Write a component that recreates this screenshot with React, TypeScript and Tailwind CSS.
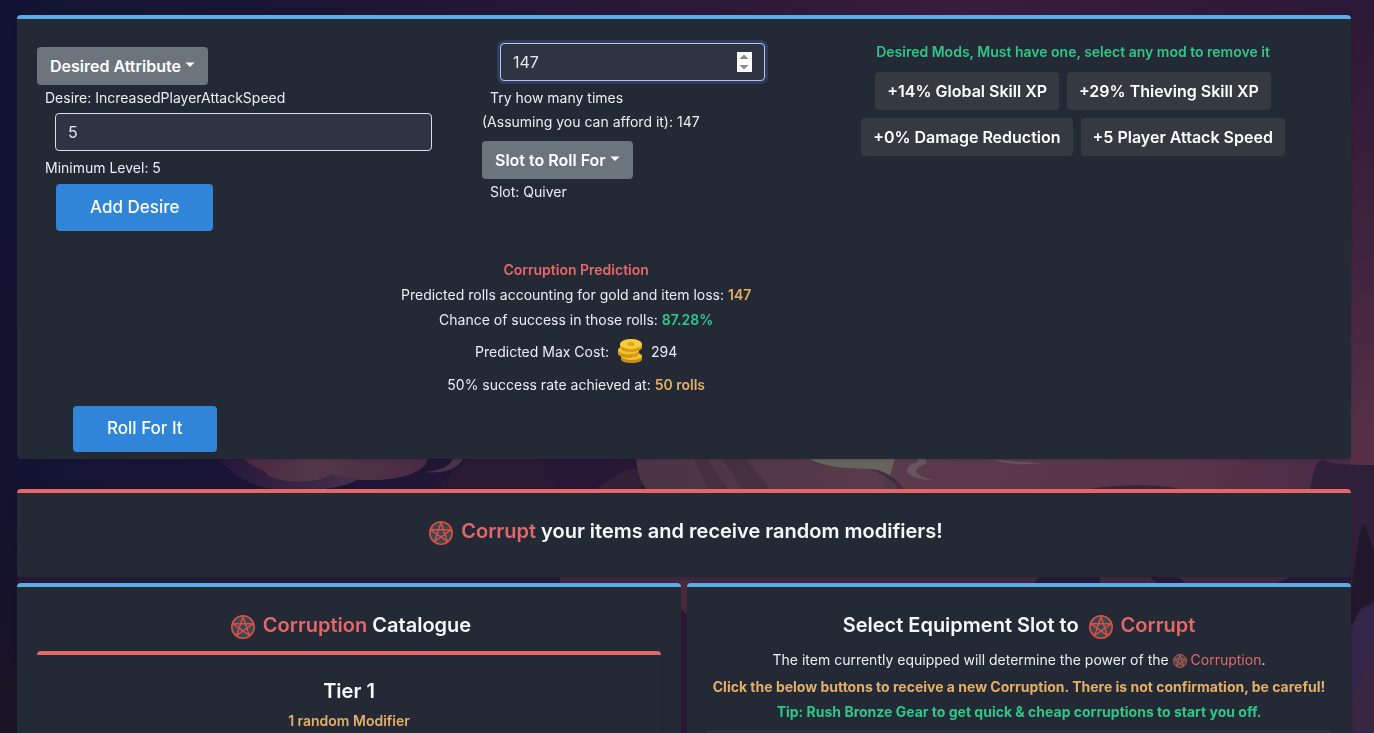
import type { ReactNode } from "react";
import clsx from "clsx";

const desiredMods = [
  "+14% Global Skill XP",
  "+29% Thieving Skill XP",
  "+0% Damage Reduction",
  "+5 Player Attack Speed",
];

const Backdrop = () => (
  <svg
    aria-hidden="true"
    viewBox="0 0 1374 733"
    preserveAspectRatio="xMidYMid slice"
    className="fixed inset-0 -z-10 h-full w-full"
  >
    <defs>
      <linearGradient id="sky" x1="0" x2="1" y1="0" y2="0">
        <stop offset="0" stopColor="#121433" />
        <stop offset="0.25" stopColor="#1e1535" />
        <stop offset="0.5" stopColor="#2a1836" />
        <stop offset="0.7" stopColor="#371e3a" />
        <stop offset="1" stopColor="#2a1836" />
      </linearGradient>
      <linearGradient id="right" x1="0" x2="0" y1="0" y2="1">
        <stop offset="0" stopColor="#2a1836" />
        <stop offset="0.35" stopColor="#40243d" />
        <stop offset="0.6" stopColor="#553047" />
        <stop offset="1" stopColor="#4a2b44" />
      </linearGradient>
      <linearGradient id="left" x1="0" x2="0" y1="0" y2="1">
        <stop offset="0" stopColor="#121433" />
        <stop offset="0.7" stopColor="#14132f" />
        <stop offset="1" stopColor="#1b1424" />
      </linearGradient>
      <linearGradient id="petal" x1="0" x2="1" y1="0" y2="0">
        <stop offset="0" stopColor="#4a2741" />
        <stop offset="0.4" stopColor="#533749" />
        <stop offset="1" stopColor="#4a2a42" />
      </linearGradient>
      <linearGradient id="petalShade" x1="0" x2="1" y1="0" y2="0">
        <stop offset="0" stopColor="#24163a" />
        <stop offset="1" stopColor="#48304a" />
      </linearGradient>
      <linearGradient id="skin" x1="0" x2="1" y1="0" y2="0">
        <stop offset="0" stopColor="#4a3446" />
        <stop offset="0.35" stopColor="#5a3b4b" />
        <stop offset="0.75" stopColor="#58354a" />
        <stop offset="1" stopColor="#4a2a46" />
      </linearGradient>
    </defs>
    <rect width="1374" height="733" fill="url(#sky)" />
    <rect width="17" height="733" fill="url(#left)" />
    <rect x="1345" width="29" height="733" fill="url(#right)" />
    <path d="M215 455C228 470 245 484 270 489H325C345 486 355 482 362 476L340 455Z" fill="url(#petalShade)" />
    <path d="M240 455C247 464 256 467 264 471C270 484 318 485 332 474C345 478 358 480 366 480C396 481 428 474 428 455Z" fill="url(#petal)" />
    <path d="M424 472C444 471 452 464 454 456H464C460 468 447 474 424 472Z" fill="#493348" />
    <path d="M434 489L470 456H540L560 489Z" fill="#2a1932" />
    <path d="M595 489L625 470L658 468L640 489Z" fill="#352039" />
    <path d="M636 455H1350V489H646C640 480 636 470 636 455Z" fill="url(#skin)" />
    <path d="M692 455L708 489H728L704 455ZM720 455L742 489H770L742 455Z" fill="#45303f" />
    <path d="M802 455C818 468 842 469 872 469C884 472 894 480 902 489H884V455Z" fill="#4c3a47" />
    <path d="M802 455C818 466 842 469 872 469C880 470 886 473 890 476L896 455Z" fill="#67635b" />
    <path d="M868 469C884 470 896 478 904 489H900C892 480 882 473 868 469Z" fill="#432c40" />
    <path d="M918 458H926V464C912 468 912 476 934 480C904 480 900 466 918 462Z" fill="#67565f" />
    <path d="M990 459C1008 465 1024 465 1042 463C1024 462 1008 461 990 459Z" fill="#66525f" />
    <path d="M1090 489C1120 484 1155 484 1180 489Z" fill="#3d2240" />
    <path d="M1310 489C1314 474 1314 462 1322 460C1340 465 1352 465 1374 465V733H1345V489Z" fill="#30203a" />
    <path d="M1350 600C1356 560 1358 530 1364 524C1368 534 1372 545 1374 550V600L1350 626Z" fill="#21182b" />
    <path d="M17 572H1351V588H17Z" fill="#281a36" />
    <path d="M118 577H205V586H118Z" fill="#1c2038" />
    <path d="M560 577H1040L1030 586H560ZM1100 577H1150L1160 586H1100ZM1178 577H1290L1270 586H1190Z" fill="#3f2940" />
    <path d="M680 580H690V616C688 616 684 612 680 608Z" fill="#492a3e" />
    <path d="M1351 636C1356 612 1362 602 1374 606V733H1351Z" fill="#32274a" />
    <path d="M1351 700C1362 684 1368 650 1374 628V733H1351Z" fill="#382642" />
  </svg>
);

const CorruptionIcon = ({ className }: { className?: string }) => (
  <svg viewBox="0 0 24 24" aria-hidden="true" className={clsx("inline-block", className)}>
    <circle cx="12" cy="12" r="11.200" fill="#34495e" stroke="#e04f3c" strokeWidth="1.600" />
    <path
      d="M12 1.5L18.3 20.5L2 8.8H22L5.7 20.5Z"
      fill="none"
      stroke="#e04f3c"
      strokeWidth="1.500"
      strokeLinejoin="round"
    />
  </svg>
);

const CoinsIcon = () => (
  <svg viewBox="0 0 26 26" aria-hidden="true" className="mx-2 inline-block h-[26px] w-[26px]">
    <path d="M4 18V21C4 26.4 25 26.4 25 21V18Z" fill="#c88f12" />
    <ellipse cx="14.5" cy="18" rx="10.5" ry="4" fill="#f3c02f" />
    <path d="M1 12V15.5C1 20.8 22 20.8 22 15.5V12Z" fill="#d49b17" />
    <ellipse cx="11.5" cy="12" rx="10.5" ry="4.2" fill="#f3c02f" />
    <path d="M3 6V9.5C3 15.2 25 15.2 25 9.5V6Z" fill="#d9a31c" />
    <ellipse cx="14" cy="6" rx="11" ry="5" fill="#f8cb3c" />
    <ellipse cx="14" cy="6" rx="3.5" ry="2" fill="#dfa91f" />
    <path
      d="M6 10V12.5M9 11V13.5M12 12V14M15 12V14M18 11V13.5M21 10V12.5M4 16V18M7 17V19M10 18V20M13 18V20M11 22V24.5M15 22V25M19 22V24.5"
      stroke="#b8800e"
      strokeWidth="0.8"
    />
  </svg>
);

type BlockProps = {
  color: "blue" | "red";
  className?: string;
  children: ReactNode;
};

const Block = ({ color, className, children }: BlockProps) => (
  <section
    className={clsx(
      "rounded border-t-4 bg-[#232a35] px-5 shadow-sm",
      color === "blue" ? "border-[#5cace5]" : "border-[#e56767]",
      className
    )}
  >
    {children}
  </section>
);

const DropdownButton = ({ children }: { children: ReactNode }) => (
  <button
    type="button"
    aria-haspopup="menu"
    className="flex h-[38px] cursor-pointer items-center gap-1 rounded bg-[#6c757d] px-[13px] text-base font-semibold text-white"
  >
    {children}
    <svg viewBox="0 0 10 5" aria-hidden="true" className="mb-1 h-[5px] w-[10px]">
      <path d="M0.5 0.5H9.5L5 5Z" fill="currentColor" />
    </svg>
  </button>
);

const PrimaryButton = ({ className, children }: { className?: string; children: ReactNode }) => (
  <button
    type="button"
    className={clsx(
      "cursor-pointer rounded bg-[#3085d8] text-[17px] font-medium text-white",
      className
    )}
  >
    {children}
  </button>
);

const inputStyle =
  "h-[38px] rounded border bg-[#2e3441] px-3 text-base text-[#e4e7ed] outline-none";

const DesireForm = () => (
  <div className="flex flex-[445] flex-col items-start pt-1">
    <DropdownButton>Desired Attribute</DropdownButton>
    <label htmlFor="min-level" className="mt-[3px] px-2 leading-5">
      Desire: IncreasedPlayerAttackSpeed
    </label>
    <div className="mt-[5px] w-full pr-[50px] pl-[18px]">
      <input id="min-level" type="text" defaultValue="5" className={clsx(inputStyle, "w-full border-[#d8dde6]")} />
    </div>
    <p className="mt-[7px] px-2 leading-5">Minimum Level: 5</p>
    <PrimaryButton className="mt-[6px] ml-[19px] h-[47px] px-[34px]">Add Desire</PrimaryButton>
  </div>
);

const RollForm = () => (
  <div className="flex flex-[333] flex-col items-start">
    <div className="w-full pr-[50px] pl-[18px]">
      <input
        id="tries"
        type="number"
        defaultValue={147}
        autoFocus
        className={clsx(inputStyle, "w-full border-[#b4c6ee] ring-3 ring-[#2e3c5f]")}
      />
    </div>
    <label htmlFor="tries" className="mt-[5px] leading-6">
      <span className="px-2">Try how many times</span>
      <br />
      (Assuming you can afford it): 147
    </label>
    <div className="mt-[7px]">
      <DropdownButton>Slot to Roll For</DropdownButton>
    </div>
    <p className="mt-[3px] px-2 leading-5">Slot: Quiver</p>
  </div>
);

const DesiredMods = () => (
  <div className="flex flex-[516] flex-col items-center">
    <h2 className="leading-[18px] font-semibold text-[#2fc686]">
      Desired Mods, Must have one, select any mod to remove it
    </h2>
    <div className="mt-[11px] flex max-w-[440px] flex-wrap justify-center gap-2">
      {desiredMods.map((mod) => (
        <button
          key={mod}
          type="button"
          className="h-[38px] cursor-pointer rounded bg-[#343a40] px-3 text-base font-semibold text-white"
        >
          {mod}
        </button>
      ))}
    </div>
  </div>
);

const Prediction = () => (
  <div className="mt-[26px] w-5/6 text-center leading-[25px]">
    <h2 className="font-semibold text-[#e56767]">Corruption Prediction</h2>
    <p>
      Predicted rolls accounting for gold and item loss:{" "}
      <span className="font-semibold text-[#e5ae67]">147</span>
    </p>
    <p>
      Chance of success in those rolls: <span className="font-semibold text-[#30c78d]">87.28%</span>
    </p>
    <p className="flex h-[38px] items-center justify-center">
      Predicted Max Cost: <CoinsIcon /> 294
    </p>
    <p className="mt-[2px]">
      50% success rate achieved at: <span className="font-semibold text-[#e5ae67]">50 rolls</span>
    </p>
  </div>
);

const BlockTitle = ({ children }: { children: ReactNode }) => (
  <h2 className="flex items-center justify-center text-xl leading-6 font-semibold text-[#f7f8fa]">
    {children}
  </h2>
);

const App = () => {
  return (
    <main className="isolate flex h-screen flex-col overflow-hidden pt-[15px] pr-[23px] pl-[17px] font-['Inter',sans-serif] text-[14px] text-[#ebedf2]">
      <Backdrop />

      <Block color="blue" className="shrink-0 pt-6 pb-[7px]">
        <div className="flex">
          <DesireForm />
          <RollForm />
          <DesiredMods />
        </div>
        <Prediction />
        <PrimaryButton className="mt-[9px] ml-9 h-[46px] px-[34px]">Roll For It</PrimaryButton>
      </Block>

      <Block color="red" className="mt-[30px] shrink-0 pt-6 pb-8">
        <BlockTitle>
          <CorruptionIcon className="mt-1 mr-2 ml-1 h-6 w-6" />
          <span className="text-[#e56767]">Corrupt</span>&nbsp;your items and receive random modifiers!
        </BlockTitle>
      </Block>

      <div className="mt-[6px] grid flex-1 grid-cols-2 gap-[6px]">
        <Block color="blue" className="pt-6">
          <BlockTitle>
            <CorruptionIcon className="mt-1 mr-2 ml-1 h-6 w-6" />
            <span className="text-[#e56767]">Corruption</span>&nbsp;Catalogue
          </BlockTitle>
          <Block color="red" className="mt-3 pt-6 pb-5 text-center">
            <h3 className="text-xl leading-6 font-semibold text-[#f7f8fa]">Tier 1</h3>
            <p className="mt-2 leading-5 font-semibold text-[#e5ae67]">1 random Modifier</p>
          </Block>
        </Block>

        <Block color="blue" className="pt-6 text-center">
          <BlockTitle>
            Select Equipment Slot to
            <CorruptionIcon className="mt-1 mr-2 ml-[10px] h-6 w-6" />
            <span className="text-[#e56767]">Corrupt</span>
          </BlockTitle>
          <p className="mt-[11px] leading-5">
            The item currently equipped will determine the power of the{" "}
            <CorruptionIcon className="h-[14px] w-[14px]" />{" "}
            <span className="text-[#e56767]">Corruption</span>.
          </p>
          <p className="mt-1 leading-[25px] font-bold text-[#e5ae67]">
            Click the below buttons to receive a new Corruption. There is not confirmation, be careful!
          </p>
          <p className="leading-[25px] font-bold text-[#2fc686]">
            Tip: Rush Bronze Gear to get quick &amp; cheap corruptions to start you off.
          </p>
          <hr className="mt-[7px] border-[#343a40]" />
        </Block>
      </div>
    </main>
  );
};

export default App;
